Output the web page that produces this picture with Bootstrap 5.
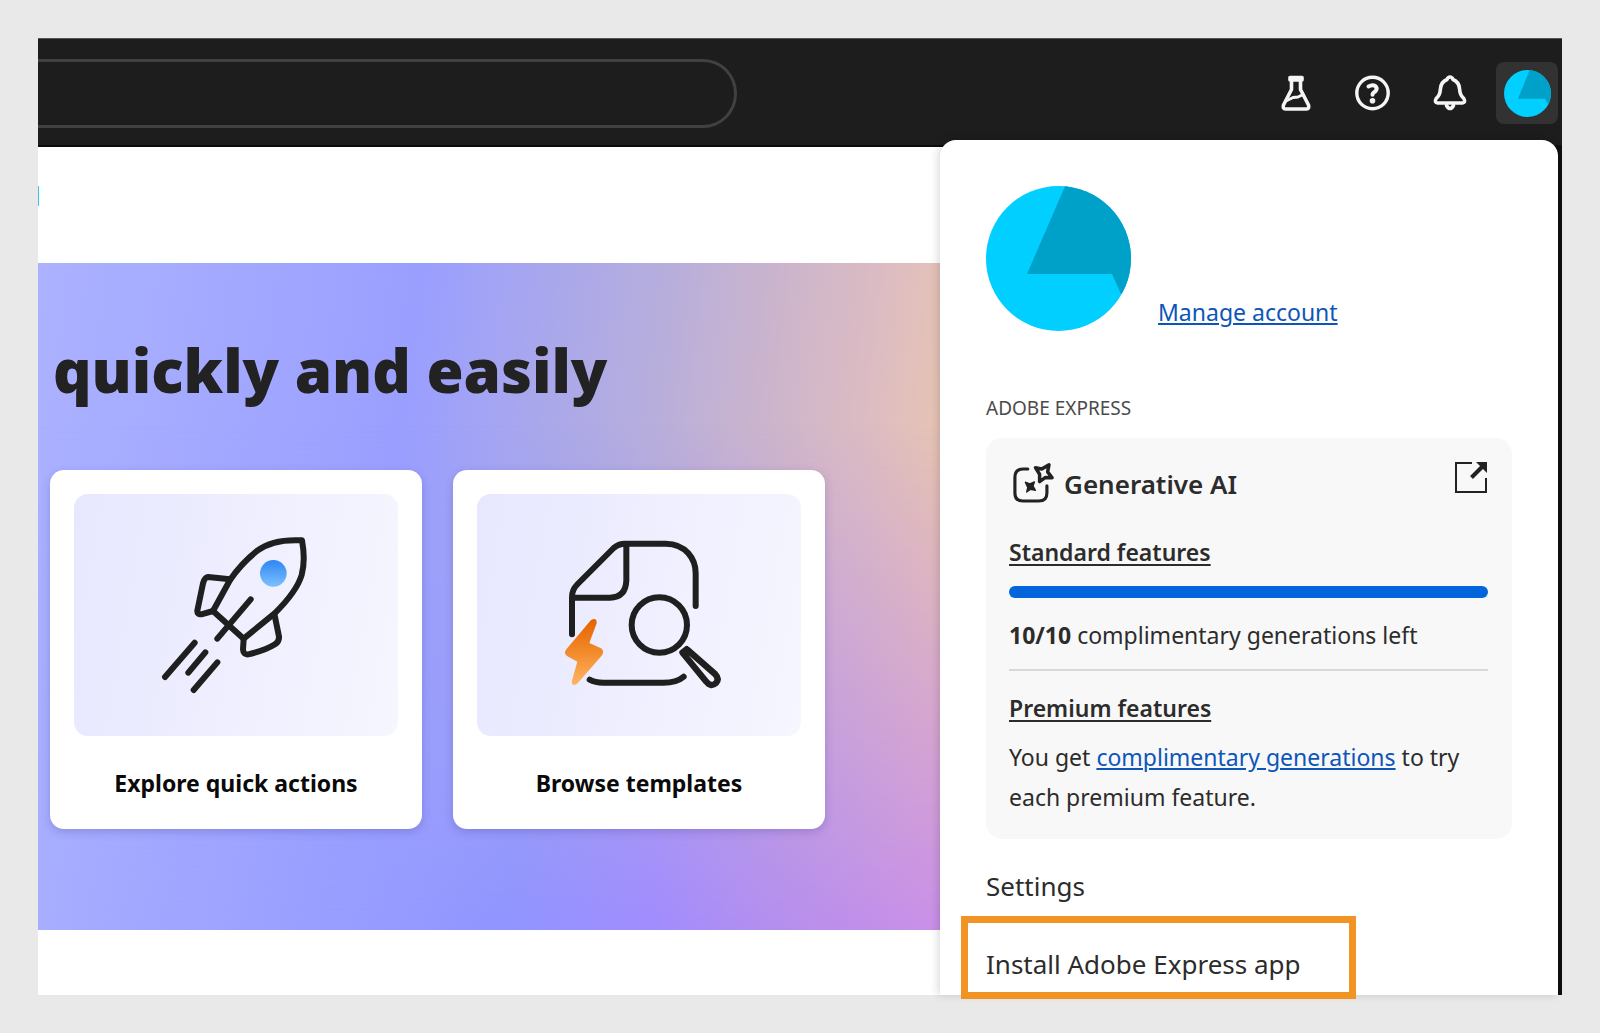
<!DOCTYPE html>
<html lang="en">
<head>
<meta charset="utf-8">
<meta name="viewport" content="width=device-width, initial-scale=1">
<title>Adobe Express</title>
<link href="https://cdn.jsdelivr.net/npm/bootstrap@5.3.0/dist/css/bootstrap.min.css" rel="stylesheet">
<style>
  body { background: #e9e9e9; color: #2c2c2c; font-family: "Noto Sans", "Open Sans", sans-serif; font-size: 23px; line-height: 36px; padding: 38px; }
  .app-frame { min-height: calc(100vh - 76px); background: #fff; }
  .top-bar { height: 109px; background: #1d1d1d; border-top: 1px solid #555; border-bottom: 2px solid #0c0c0c; padding: 2px 4px 0 0; }
  .search-box { width: 46%; height: 69px; background: #1d1d1d; color: #fff; border: 3px solid #414141; border-left: 0; border-radius: 0 34px 34px 0; padding: 0 32px; }
  .bar-actions { gap: 15px; }
  .bar-btn { width: 62px; height: 62px; padding: 0; border: 0; border-radius: 8px; color: #f5f5f5; }
  .bar-btn.is-open { background: #323232; }
  .sub-bar { height: 116px; padding-top: 39px; }
  .tab-edge { width: 1px; height: 20px; background: #3fc4f0; }
  .hero { position: relative; height: 667px; padding: 69px 12px 0; background: linear-gradient(97deg, #acb2ff 0, #9a9fff 24%, #b4addf 38%, #cdb5cb 47%, #ddbcc2 53%, #eac6ae 59%); }
  .hero::before { content: ""; position: absolute; inset: 0; background: linear-gradient(97deg, #abb1ff 0, #8f95ff 34%, #a08cff 43%, #b48eee 51%, #c88fe8 60%); -webkit-mask-image: linear-gradient(transparent 24%, #000); mask-image: linear-gradient(transparent 24%, #000); }
  .hero > * { position: relative; }
  .hero h1 { font-size: 60px; line-height: 76px; font-weight: 900; color: #222; margin: 0 0 62px; padding-left: 3px; }
  .tiles { gap: 31px; }
  .tile { width: 372px; padding: 24px 24px 28px; border: 0; border-radius: 14px; background: #fff; color: #0a0a0a; text-align: center; font-weight: 700; text-decoration: none; box-shadow: 0 3px 8px #3c3c8c40; }
  .tile-art { height: 242px; border-radius: 14px; margin-bottom: 29px; background: linear-gradient(100deg, #e7e7ff, #f6f6ff); }
  .account { position: absolute; z-index: 2; top: 102px; right: 4px; bottom: 0; width: 618px; padding: 46px 46px 0; background: #fff; border-radius: 16px 16px 0 0; box-shadow: -2px 0 8px #00000026; clip-path: inset(-8px -8px 0 -12px); }
  .account:has(.called-out) { clip-path: none; }
  .edge { position: absolute; right: 0; top: 107px; bottom: 0; width: 20px; background: #0f0f0f; }
  .account a { color: #0d56b8; }
  .who { gap: 27px; }
  .who a { padding-bottom: 1px; }
  .section-name { font-size: 19px; line-height: 28px; color: #4b4b4b; margin: 63px 0 16px; }
  .plan { background: #f8f8f8; border-radius: 16px; padding: 24px 24px 22px 23px; }
  .plan h2 { font-size: 26px; line-height: 36px; font-weight: 600; margin: 0; }
  .plan h3 { font-size: 23px; line-height: 36px; font-weight: 600; margin: 0; text-decoration: underline; text-underline-offset: 3px; text-decoration-thickness: 2px; }
  .title-row { margin-bottom: 28px; gap: 7px; height: 44px; }
  .meter { height: 12px; border-radius: 6px; margin: 16px 0 19px; --bs-progress-bar-bg: #0265dc; }
  .rule { height: 2px; background: #d8d8d8; border: 0; opacity: 1; margin: 16px 0 19px; }
  .note { line-height: 40px; margin: 11px 0 0; }
  .menu-links { padding-top: 27px; gap: 38px; font-size: 26px; line-height: 40px; }
  .menu-links a { color: #2c2c2c; text-decoration: none; position: relative; }
  .called-out::after { content: ""; position: absolute; inset: -28px -55px -15px -25px; border: 7px solid #f29423; }
</style>
<script src="https://cdn.jsdelivr.net/npm/bootstrap@5.3.0/dist/js/bootstrap.bundle.min.js"></script>
</head>
<body>
<div class="app-frame position-relative">
  <header class="top-bar d-flex align-items-center justify-content-between">
    <input class="search-box" type="search" aria-label="Search">
    <div class="bar-actions d-flex">
      <button class="btn bar-btn d-flex align-items-center justify-content-center" type="button" aria-label="Labs">
        <svg width="36" height="38" viewBox="0 0 36 38" fill="none" stroke="currentColor" stroke-width="3.600" stroke-linejoin="round" stroke-linecap="round"><path d="M12 3.500h12v2.500h-12z M13.500 7v8.500L5.500 31q-1 4 2 4h21q3 0 2-4L22.500 15.500V7"/><path d="M9 26.500 15 23.500 20 23 25 20.500" stroke-width="3"/></svg>
      </button>
      <button class="btn bar-btn d-flex align-items-center justify-content-center" type="button" aria-label="Help">
        <svg width="38" height="38" viewBox="0 0 38 38" fill="none" stroke="currentColor" stroke-width="3.400" stroke-linecap="round" stroke-linejoin="round"><circle cx="18.500" cy="19" r="15.700"/><path stroke-width="4" d="M14.500 12.500q4-2.300 7-.3 2.300 2.500 0 5-3 1.800-3 3.600"/><circle cx="18.500" cy="26.700" r="1.100" fill="currentColor"/></svg>
      </button>
      <button class="btn bar-btn d-flex align-items-center justify-content-center" type="button" aria-label="Notifications">
        <svg width="36" height="38" viewBox="0 0 36 38" fill="none" stroke="currentColor" stroke-width="3.600" stroke-linecap="round" stroke-linejoin="round"><path d="M18 3q-2 0-3 2.500Q9 8 8.500 14.500c-.5 6-1.800 7.500-4.300 10Q2 28.500 5.500 29h25q3.500-.5 1.300-4.500c-2.500-2.500-3.800-4-4.300-10Q27 8 21 5.500 20 3 18 3z"/><path d="M14.500 31.500q3.500 6 7 0"/></svg>
      </button>
      <button class="btn bar-btn is-open d-flex align-items-center justify-content-center" type="button" aria-label="Account">
        <svg width="47" height="47" viewBox="0 0 145 145"><clipPath id="c1"><circle cx="72.500" cy="72.500" r="72.500"/></clipPath><g clip-path="url(#c1)"><path fill="#00cfff" d="M0 0h145v145H0z"/><path fill="#00a1c8" d="M80-2 43 89h83l12 20 20-20V-2z"/></g></svg>
      </button>
    </div>
  </header>
  <div class="sub-bar"><div class="tab-edge"></div></div>
  <main class="hero">
    <h1>quickly and easily</h1>
    <div class="tiles d-flex">
      <a class="tile" href="#">
        <div class="tile-art d-flex align-items-center justify-content-center">
          <svg width="200" height="200" viewBox="-12 15 600 600" fill="none" stroke="#1f1f1f" stroke-width="18" stroke-linecap="round" stroke-linejoin="round">
            <defs><linearGradient id="g1" x2="0" y2="1"><stop stop-color="#2f86f3"/><stop offset="1" stop-color="#7cc0ff"/></linearGradient></defs>
            <circle cx="400" cy="190" r="40" fill="url(#g1)" stroke="none"/>
            <path d="M486 91Q400 86 352 122 304 160 270 210L219 303 311 386 404 310Q470 245 485 195 497 150 486 91z"/>
            <path d="M270 208 204 201Q194 202 189 220L172 302Q171 314 184 313L219 303M404 316 417 380Q418 394 405 403 375 422 325 433 310 435 309 418L311 386M332 268 232 386M164 398 75 501M196 427 145 488M232 457 161 540"/>
          </svg>
        </div>
        <div>Explore quick actions</div>
      </a>
      <a class="tile" href="#">
        <div class="tile-art d-flex align-items-center justify-content-center">
          <svg width="200" height="200" viewBox="-8 15 600 600" fill="none" stroke="#1f1f1f" stroke-width="18" stroke-linecap="round" stroke-linejoin="round">
            <defs><linearGradient id="g2" x2="0" y2="1"><stop stop-color="#e56200"/><stop offset=".5" stop-color="#f28a2a"/><stop offset="1" stop-color="#ffb566"/></linearGradient></defs>
            <path d="M91 373V262Q90 240 108 222L216 114Q230 101 250 101H372Q415 101 440 130 462 155 462 190V288M254 103V212Q252 262 205 263H94"/>
            <path d="M144 509Q160 518 185 518H365Q405 518 426 500"/>
            <circle cx="353" cy="345" r="83"/>
            <path d="M424 430 494 515Q508 533 523 519 534 507 520 492L438 420z" stroke-width="19"/>
            <path d="M421 427 435 416" stroke-width="16"/>
            <path fill="url(#g2)" stroke="none" d="M148 330Q166 320 165 340L143 399 178 415Q190 424 180 437L108 520Q92 532 90 515L107 455 76 438Q65 430 74 418z"/>
          </svg>
        </div>
        <div>Browse templates</div>
      </a>
    </div>
  </main>
  <div class="edge"></div>
  <aside class="account" aria-label="Account menu">
    <div class="who d-flex align-items-end">
      <svg width="145" height="145" viewBox="0 0 145 145"><g clip-path="url(#c1)"><path fill="#00cfff" d="M0 0h145v145H0z"/><path fill="#00a1c8" d="M80-2 41 88h85l9 20 20-20V-2z"/></g></svg>
      <a href="#">Manage account</a>
    </div>
    <p class="section-name">ADOBE EXPRESS</p>
    <section class="plan">
      <div class="title-row d-flex align-items-center">
        <svg width="48" height="48" viewBox="0 0 138 138" fill="none" stroke="#222" stroke-width="9" stroke-linecap="round" stroke-linejoin="round"><path d="M54 26H40Q17 26 17 50V95Q17 118 40 118H86Q109 118 109 95V74"/><path stroke-width="10" d="M76 22 94 26 115 14 111 34 124 51 105 50 88 62 88 41z"/><path fill="#222" stroke-width="4" d="M47 64 60 69 73 63 69 75 76 87 62 84 51 92 54 79z"/></svg>
        <h2 class="flex-grow-1">Generative AI</h2>
        <a class="align-self-start d-flex" href="#" aria-label="Open Generative AI"><svg width="34" height="34" viewBox="0 0 34 34" fill="none" stroke="#222" stroke-width="2"><path d="M18 1H2V30H32V16"/><path stroke-width="4" d="M17.500 15.500 28 5"/><path fill="#222" stroke="none" d="M22 0H33V11z"/></svg></a>
      </div>
      <h3>Standard features</h3>
      <div class="progress meter" role="progressbar" aria-label="Standard generations left" aria-valuenow="10" aria-valuemin="0" aria-valuemax="10"><div class="progress-bar" style="width:100%"></div></div>
      <div><b>10/10</b> complimentary generations left</div>
      <hr class="rule">
      <h3>Premium features</h3>
      <p class="note">You get <a href="#">complimentary generations</a> to try<br>each premium feature.</p>
    </section>
    <nav class="menu-links d-flex flex-column align-items-start">
      <a href="#">Settings</a>
      <a class="called-out" href="#">Install Adobe Express app</a>
    </nav>
  </aside>
</div>
</body>
</html>
